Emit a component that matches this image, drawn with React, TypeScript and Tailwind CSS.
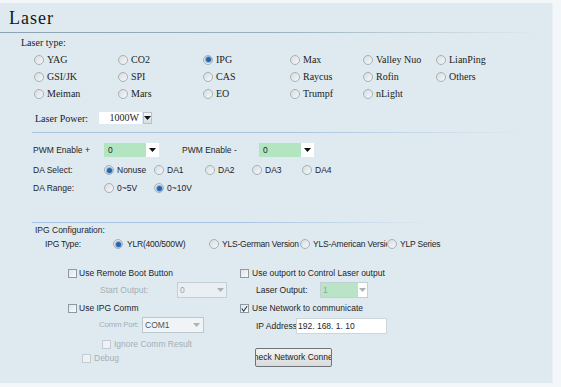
import React from 'react';

function Radio({ checked = false }: { checked?: boolean }) {
  return (
    <span className="w-[10px] h-[10px] shrink-0 rounded-full border border-[#a7b0b6] bg-gradient-to-br from-[#d6dce0] to-[#f7f9fa] flex items-center justify-center">
      {checked && <span className="w-[5px] h-[5px] rounded-full bg-[#2466ad] ring-1 ring-[#8fb4dc]" />}
    </span>
  );
}

function Check({ checked = false, disabled = false }: { checked?: boolean; disabled?: boolean }) {
  return (
    <span
      className={
        disabled
          ? 'w-[9px] h-[9px] shrink-0 border border-[#c3ccd2] bg-[#eef2f4] flex items-center justify-center'
          : 'w-[9px] h-[9px] shrink-0 border border-[#8e9aa3] bg-gradient-to-br from-[#dfe4e8] to-[#fafbfc] flex items-center justify-center'
      }
    >
      {checked && (
        <svg width="8" height="8" viewBox="0 0 8 8">
          <path d="M1 3.5 L3 6.5 L7 0.8" stroke="#1f2d3a" strokeWidth="1.2" fill="none" />
        </svg>
      )}
    </span>
  );
}

function Arrow({ color = '#111' }: { color?: string }) {
  return (
    <svg width="7" height="4" viewBox="0 0 7 4">
      <path d="M0 0 L7 0 L3.5 4 Z" fill={color} />
    </svg>
  );
}

const laserTypes = [
  ['YAG', 'CO2', 'IPG', 'Max', 'Valley Nuo', 'LianPing'],
  ['GSI/JK', 'SPI', 'CAS', 'Raycus', 'Rofin', 'Others'],
  ['Meiman', 'Mars', 'EO', 'Trumpf', 'nLight', ''],
];
const colWidths = ['w-[84px]', 'w-[85px]', 'w-[87px]', 'w-[73px]', 'w-[73px]', 'w-[70px]'];

export default function App() {
  const serif = "font-['Liberation_Serif',serif] text-[10px] text-[#1b1b1b]";
  const sans = "font-['Liberation_Sans',Arial,sans-serif] text-[8.5px] text-[#1e2428]";
  return (
    <div className="w-[561px] h-[387px] bg-[#f3f7f9] pt-[3px]">
      <div className="w-[553px] h-[380px] bg-[#deeaf0] border-r border-[#e9f0f3] flex flex-col">
        {/* Title */}
        <div className="h-[29px] flex items-center pl-[9px] pt-[1px]">
          <span className="font-['Liberation_Serif',serif] text-[18px] tracking-[1px] text-[#161616]">Laser</span>
        </div>
        <div className="h-px w-[540px] bg-gradient-to-r from-[#8ea3b1] via-[#9ab0bd] to-transparent" />

        <div className={`h-[18px] flex items-center pl-[21px] ${serif}`}>Laser type:</div>

        {/* Laser type radios */}
        <div className={`flex flex-col pl-[34px] ${serif}`}>
          {laserTypes.map((row, ri) => (
            <div key={ri} className="h-[17px] flex items-center">
              {row.map((name, ci) => (
                <div key={ci} className={`${colWidths[ci]} flex items-center gap-[3px]`}>
                  {name && (
                    <>
                      <Radio checked={name === 'IPG'} />
                      <span className="whitespace-nowrap">{name}</span>
                    </>
                  )}
                </div>
              ))}
            </div>
          ))}
        </div>

        {/* Laser Power */}
        <div className={`mt-[8px] h-[16px] flex items-center pl-[35px] ${serif}`}>
          <span className="w-[64px]">Laser Power:</span>
          <span className="w-[43px] h-[12px] bg-white flex items-center justify-end pr-[3px] leading-none">1000W</span>
          <span className="ml-[1px] w-[9px] h-[12px] border border-[#b8c2c8] bg-gradient-to-b from-[#f6f7f8] to-[#d7dde1] flex items-center justify-center">
            <Arrow />
          </span>
        </div>

        <div className="mt-[6px] ml-[32px] h-px w-[496px] bg-gradient-to-r from-[#a8c2e2] via-[#a8c2e2] to-transparent" />

        {/* PWM */}
        <div className={`mt-[10px] h-[14px] flex items-center pl-[33px] ${sans}`}>
          <span className="w-[71px]">PWM Enable +</span>
          <span className="w-[42px] h-[14px] bg-[#b2e5c0] pl-[4px] flex items-center">0</span>
          <span className="w-[13px] h-[14px] bg-white flex items-center justify-center">
            <Arrow />
          </span>
          <span className="ml-[23px] w-[77px]">PWM Enable -</span>
          <span className="w-[42px] h-[14px] bg-[#b2e5c0] pl-[4px] flex items-center">0</span>
          <span className="w-[13px] h-[14px] bg-white flex items-center justify-center">
            <Arrow />
          </span>
        </div>

        {/* DA Select */}
        <div className={`mt-[5px] h-[16px] flex items-center pl-[33px] ${sans}`}>
          <span className="w-[71px]">DA Select:</span>
          {[
            ['Nonuse', 'w-[50px]', true],
            ['DA1', 'w-[51px]', false],
            ['DA2', 'w-[47px]', false],
            ['DA3', 'w-[50px]', false],
            ['DA4', 'w-[40px]', false],
          ].map(([label, w, c]) => (
            <span key={label as string} className={`${w} flex items-center gap-[3px]`}>
              <Radio checked={c as boolean} />
              {label as string}
            </span>
          ))}
        </div>

        {/* DA Range */}
        <div className={`mt-[2px] h-[16px] flex items-center pl-[33px] ${sans}`}>
          <span className="w-[71px]">DA Range:</span>
          <span className="w-[50px] flex items-center gap-[3px]">
            <Radio />
            0~5V
          </span>
          <span className="w-[50px] flex items-center gap-[3px]">
            <Radio checked />
            0~10V
          </span>
        </div>

        <div className="mt-[26px] ml-[32px] h-px w-[402px] bg-gradient-to-r from-[#a8c2e2] via-[#a8c2e2] to-transparent" />

        <div className={`mt-[1px] h-[12px] flex items-center pl-[35px] ${sans}`}>IPG Configuration:</div>

        {/* IPG Type */}
        <div className={`mt-[1px] h-[14px] flex items-center pl-[45px] tracking-[-0.2px] ${sans}`}>
          <span className="w-[68px]">IPG Type:</span>
          <span className="w-[96px] flex items-center gap-[4px]">
            <Radio checked />
            YLR(400/500W)
          </span>
          <span className="w-[91px] flex items-center gap-[3px] whitespace-nowrap">
            <Radio />
            YLS-German Version
          </span>
          <span className="w-[87px] flex items-center gap-[3px] whitespace-nowrap overflow-hidden">
            <Radio />
            YLS-American Version
          </span>
          <span className="flex items-center gap-[3px] whitespace-nowrap">
            <Radio />
            YLP Series
          </span>
        </div>

        {/* Bottom two columns */}
        <div className={`mt-[13px] flex ${sans}`}>
          {/* left column */}
          <div className="w-[172px] ml-[68px] flex flex-col">
            <div className="h-[18px] flex items-center gap-[2px]">
              <Check />
              <span>Use Remote Boot Button</span>
            </div>
            <div className="h-[16px] flex items-center pl-[32px]">
              <span className="w-[77px] text-[#a5afb6] whitespace-nowrap">Start Output:</span>
              <span className="w-[50px] h-[16px] border border-[#c4ced5] bg-[#e9eff2] flex items-center pl-[2px] text-[#9aa4ab]">
                <span className="flex-1">0</span>
                <span className="w-[11px] flex items-center justify-center">
                  <Arrow color="#a9b2b8" />
                </span>
              </span>
            </div>
            <div className="mt-[2px] h-[17px] flex items-center gap-[2px]">
              <Check />
              <span>Use IPG Comm</span>
            </div>
            <div className="h-[16px] flex items-center pl-[31px]">
              <span className="w-[43px] text-[8px] text-[#a5afb6] whitespace-nowrap tracking-[-0.3px]">Comm Port:</span>
              <span className="w-[62px] h-[16px] border border-[#bcc7ce] bg-[#f1f4f6] flex items-center pl-[2px] text-[#4a545b]">
                <span className="flex-1">COM1</span>
                <span className="w-[14px] flex items-center justify-center">
                  <Arrow color="#a9b2b8" />
                </span>
              </span>
            </div>
            <div className="mt-[3px] h-[16px] flex items-center gap-[3px] pl-[34px] text-[#a5afb6]">
              <Check disabled />
              <span>Ignore Comm Result</span>
            </div>
            <div className="h-[12px] flex items-center gap-[3px] pl-[14px] text-[#a5afb6]">
              <Check disabled />
              <span>Debug</span>
            </div>
          </div>

          {/* right column */}
          <div className="flex flex-col">
            <div className="h-[18px] flex items-center gap-[3px]">
              <Check />
              <span>Use outport to Control Laser output</span>
            </div>
            <div className="h-[16px] flex items-center pl-[16px]">
              <span className="w-[64px]">Laser Output:</span>
              <span className="w-[48px] h-[16px] border border-[#c4ced5] flex items-center">
                <span className="w-[37px] h-full bg-[#b9e5c6] pl-[2px] text-[#8fa397] flex items-center">1</span>
                <span className="flex-1 h-full bg-white flex items-center justify-center">
                  <Arrow color="#a9b2b8" />
                </span>
              </span>
            </div>
            <div className="mt-[2px] h-[17px] flex items-center gap-[3px]">
              <Check checked />
              <span>Use Network to communicate</span>
            </div>
            <div className="mt-[1px] h-[16px] flex items-center pl-[16px]">
              <span className="w-[40px] whitespace-nowrap">IP Address</span>
              <span className="w-[91px] h-[16px] bg-white border border-[#ccd6dc] flex items-center pl-[1px] text-[#1e2428] whitespace-pre">
                192. 168. 1. 10
              </span>
            </div>
            <div className="mt-[14px] ml-[15px] w-[77px] h-[19px] border border-[#6f7479] rounded-[2px] bg-gradient-to-b from-[#f4f4f4] to-[#d9dadb] flex items-center justify-center overflow-hidden whitespace-nowrap text-[#1b1f22]">
              Check Network Connect
            </div>
          </div>
        </div>
      </div>
    </div>
  );
}
